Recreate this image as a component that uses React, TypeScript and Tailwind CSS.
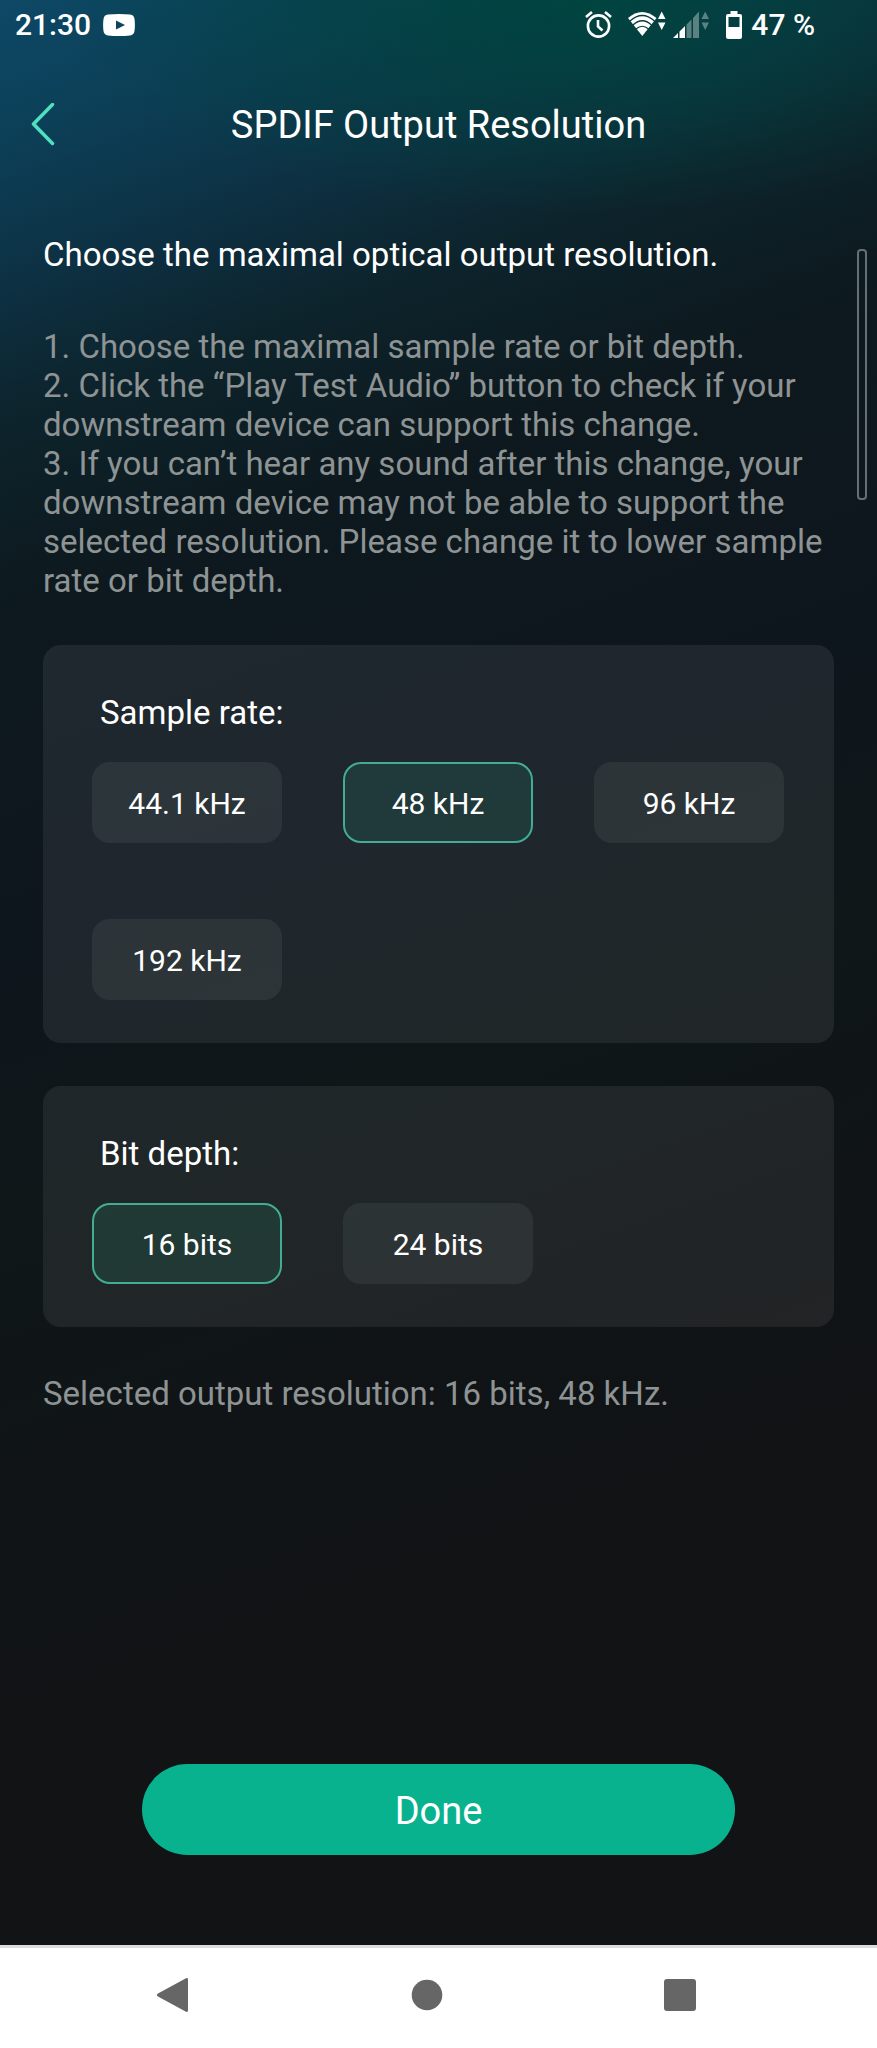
import { useState } from "react";

const sampleRates = ["44.1 kHz", "48 kHz", "96 kHz", "192 kHz"];
const bitDepths = ["16 bits", "24 bits"];

function StatusBar() {
  return (
    <div className="flex h-[49px] items-center justify-between pl-[15px] pr-[62px] text-[30px] leading-[36px] font-medium">
      <div className="flex items-center gap-3">
        <span>21:30</span>
        <svg width="32" height="22" viewBox="0 0 32 22">
          <path
            fill="#fff"
            fillRule="evenodd"
            d="M5 .6Q16-.5 27 .6Q31 1 31.5 5Q32.3 11 31.5 17Q31 21 27 21.4Q16 22.5 5 21.4Q1 21 .5 17Q-.3 11 .5 5Q1 1 5 .6ZM13 6.5v9l9-4.5z"
          />
        </svg>
      </div>
      <div className="flex items-center">
        <svg className="mr-4" width="27" height="28" viewBox="0 0 27 28" fill="none" stroke="#fff">
          <circle cx="13.5" cy="15" r="10.6" strokeWidth="2.6" />
          <path strokeWidth="2.6" d="M13 9v6.5l4.5 4M1 6L7 1M26 6L20 1" />
        </svg>
        <svg className="mr-1.5" width="39" height="28" viewBox="0 0 39 28">
          <path fill="#fff" d="M0 7Q14-5 28.5 7L14.3 25z" />
          <path
            fill="none"
            stroke="#073a3f"
            strokeWidth="1.2"
            d="M2 10Q14.3-1 26.5 10M5 14Q14.3 5.500 23.5 14M8 18Q14.3 12.500 20.5 18"
          />
          <path fill="#fff" d="M30 8h7.500L33.700 .5zM30 11.500h7.500L33.700 19z" />
        </svg>
        <svg className="mr-4" width="37" height="28" viewBox="0 0 37 28">
          <path fill="#fff" d="M0 27l5-5v5zM6.500 20.500l5.500-5.500v12H6.500z" />
          <path
            fill="#fff"
            fillOpacity=".35"
            d="M13.500 13.500L18.500 8.500V27h-5zM20 7l6-6.500V27h-6zM28.500 8H36L32.200 .5zM28.500 11.500H36l-3.800 7.500z"
          />
        </svg>
        <svg className="mr-[9px]" width="16" height="28" viewBox="0 0 16 28">
          <path
            fill="#fff"
            fillRule="evenodd"
            d="M4.500 0h7v3H14q2 0 2 2v21q0 2-2 2H2q-2 0-2-2V5q0-2 2-2h2.500zM2.500 6v10h11V6z"
          />
        </svg>
        <span>47 %</span>
      </div>
    </div>
  );
}

type OptionCardProps = {
  title: string;
  options: string[];
  selected: string;
  onSelect: (value: string) => void;
};

function OptionCard({ title, options, selected, onSelect }: OptionCardProps) {
  return (
    <section className="rounded-[18px] bg-white/[0.07] pt-12 pr-[50px] pb-[43px] pl-[49px]">
      <h2 className="px-2 text-[33px] leading-[39px]">{title}</h2>
      <div className="mt-[30px] grid grid-cols-3 gap-x-[61px] gap-y-[76px]">
        {options.map((option) => (
          <button
            key={option}
            type="button"
            aria-pressed={option === selected}
            onClick={() => onSelect(option)}
            className={
              option === selected
                ? "h-[81px] rounded-[18px] border-2 border-[#42ad94] bg-[#2ee6b4]/10 pt-0.5 text-[30px]"
                : "h-[81px] rounded-[18px] bg-[#e0ffe8]/[0.065] pt-0.5 text-[30px]"
            }
          >
            {option}
          </button>
        ))}
      </div>
    </section>
  );
}

export default function App() {
  const [rate, setRate] = useState("48 kHz");
  const [depth, setDepth] = useState("16 bits");

  return (
    <div className="flex min-h-screen flex-col bg-[#111315] font-[Roboto,sans-serif] text-white">
      <div className="flex flex-1 flex-col bg-[radial-gradient(ellipse_60%_11%_at_66%_0%,#00443f_0%,#00443f90_45%,#00443f00_100%),linear-gradient(160deg,#0d4866_0%,#0c4058_6%,#0d3042_13%,#0d232b_19%,#0d191e_27%,#0e161d_42%,#0f1719_54%,#101416_66%,#111315_77%)]">
        <StatusBar />
        <header className="grid h-[152px] grid-cols-[1fr_auto_1fr] items-center">
          <button type="button" aria-label="Back" className="justify-self-start px-[30px]">
            <svg width="26" height="44" viewBox="0 0 26 44" fill="none">
              <path
                stroke="#4fe0c0"
                strokeWidth="3.500"
                strokeLinecap="round"
                strokeLinejoin="round"
                d="M22.500 1.500L3.500 21L22.500 40.500"
              />
            </svg>
          </button>
          <h1 className="text-[38px] leading-[45px]">SPDIF Output Resolution</h1>
        </header>

        <main className="relative flex flex-1 flex-col px-[43px] pt-[34px] pb-[90px]">
          <div className="absolute top-12 right-[10px] h-[251px] w-[10px] rounded-[4px] border-2 border-[#667074]" />
          <p className="text-[33px] leading-[39px]">Choose the maximal optical output resolution.</p>
          <ol className="mt-[53px] text-[33px] leading-[39px] text-[#8e9394]">
            <li>1. Choose the maximal sample rate or bit depth.</li>
            <li>2. Click the “Play Test Audio” button to check if your downstream device can support this change.</li>
            <li>
              3. If you can’t hear any sound after this change, your downstream device may not be able to support the
              selected resolution. Please change it to lower sample rate or bit depth.
            </li>
          </ol>

          <div className="mt-[45px] flex flex-col gap-[43px]">
            <OptionCard title="Sample rate:" options={sampleRates} selected={rate} onSelect={setRate} />
            <OptionCard title="Bit depth:" options={bitDepths} selected={depth} onSelect={setDepth} />
          </div>
          <p className="mt-[47px] text-[33px] leading-[39px] text-[#8e9394]">
            Selected output resolution: {depth}, {rate}.
          </p>

          <button type="button" className="mx-[99px] mt-auto h-[91px] rounded-full bg-[#08b28f] pt-1 text-[38px]">
            Done
          </button>
        </main>
      </div>

      <nav className="flex h-[103px] items-center justify-between border-t-3 border-[#dcdcdc] bg-white pr-[179px] pb-1.5 pl-[155px]">
        <button type="button" aria-label="Back">
          <svg width="36" height="36" viewBox="0 0 36 36" fill="#666">
            <path d="M2.500 16.800L31 1.200Q33 .6 33 2.500V33.500Q33 35.400 31 34.800L2.500 19.200Q1 18 2.500 16.800z" />
          </svg>
        </button>
        <button type="button" aria-label="Home">
          <svg width="36" height="36" viewBox="0 0 36 36" fill="#666">
            <circle cx="18" cy="18" r="15.300" />
          </svg>
        </button>
        <button type="button" aria-label="Recent apps">
          <svg width="36" height="36" viewBox="0 0 36 36" fill="#666">
            <rect x="2" y="2" width="32" height="32" rx="3" />
          </svg>
        </button>
      </nav>
    </div>
  );
}
